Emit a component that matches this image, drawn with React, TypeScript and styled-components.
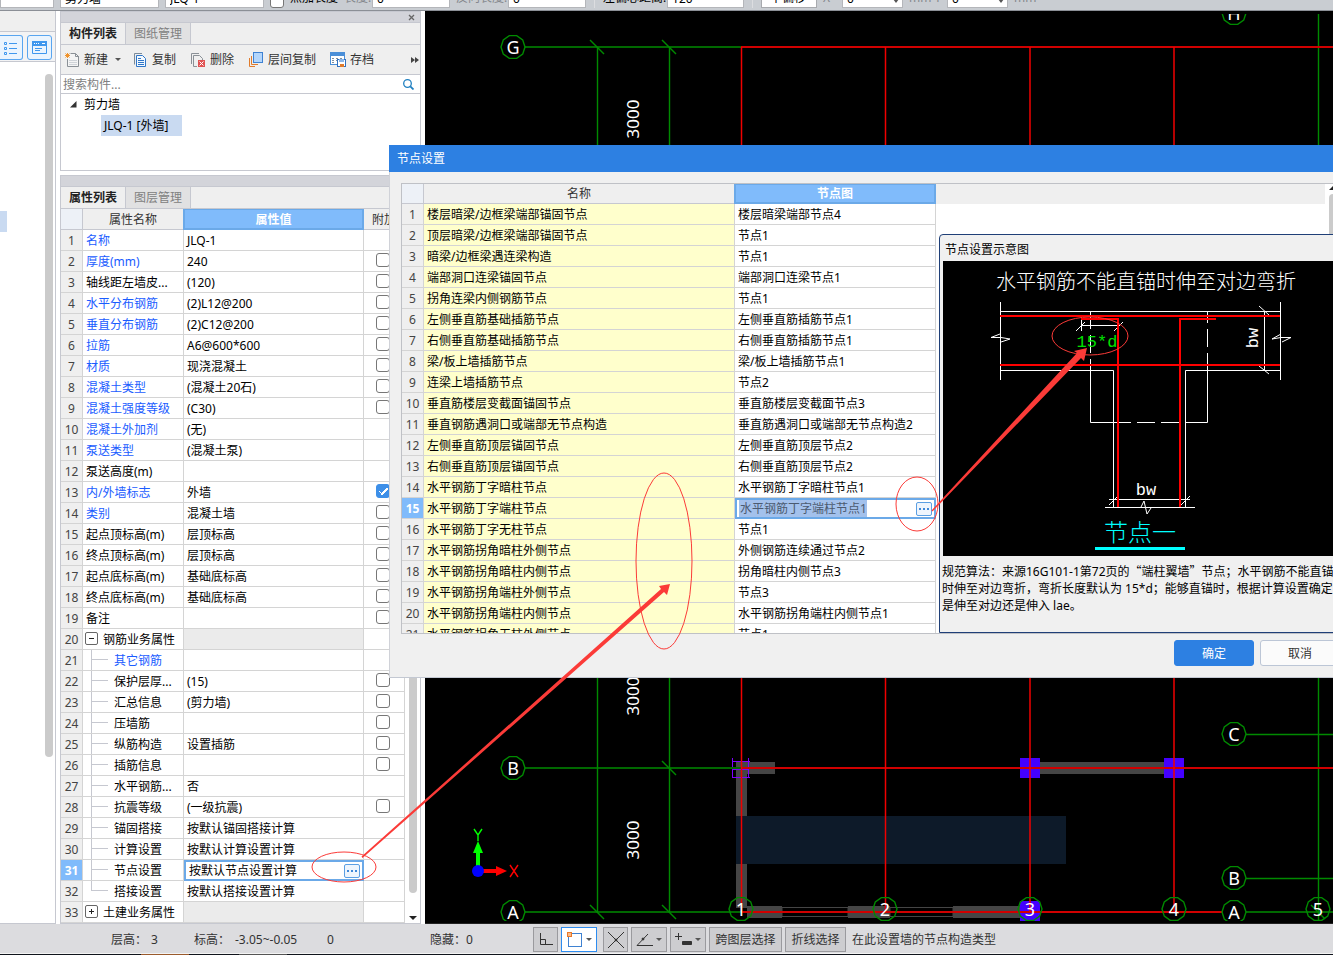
import React from 'react';
import styled, { createGlobalStyle, css } from 'styled-components';

const GlobalStyle = createGlobalStyle`
  * { box-sizing: border-box; }
  body { margin: 0; }
  body, button, input, select {
    font-family: "Noto Sans", "Noto Sans CJK SC", sans-serif;
    font-size: 12px;
    line-height: 18px;
    color: #000;
  }
  button, input, select { margin: 0; padding: 0; }
`;

const line = '#c6c8d0';
const gridLine = '#d4d4d4';
const selected = '#80bbfb';
const annotation = '#fb3b38';

const Screen = styled.div`
  position: relative;
  display: flex;
  flex-direction: column;
  min-height: 100vh;
  overflow: hidden;
  background: #fff;
`;

/* ---------- option bar ---------- */

const OptionBar = styled.div`
  display: flex;
  align-items: flex-end;
  gap: 6px;
  height: 11px;
  padding-bottom: 2px;
  overflow: hidden;
  white-space: nowrap;
  line-height: 24px;
  background: #c9cdd2;
  border-bottom: 1px solid #8b8f96;
`;

const OptionInput = styled.input<{ $w: number }>`
  width: ${p => p.$w}px;
  height: 22px;
  flex: none;
  padding: 2px 4px 0;
  border: 1px solid #b4b6ba;
  background: #fff;
`;

const OptionSelect = styled.select`
  width: 56px;
  height: 23px;
  flex: none;
  padding: 2px 8px 0;
  border: 1px solid #a8aaae;
  background: #fff;
  appearance: none;
`;

const OptionField = styled.label<{ $w: number; $muted?: boolean }>`
  display: flex;
  flex: none;
  height: 22px;
  color: ${p => (p.$muted ? '#85888d' : '#000')};
  > span { width: ${p => p.$w}px; }
`;

const OptionText = styled.span`
  height: 22px;
  color: #85888d;
`;

const OptionLabel = styled.label`
  height: 22px;
`;

const Spin = styled.span`
  position: relative;
  display: flex;
  &&& { width: auto; }
  &::after {
    content: '';
    position: absolute;
    right: 4px;
    bottom: 5px;
    border: 3px solid transparent;
    border-top: 4px solid #555;
    border-bottom: 0;
  }
`;

const OptionDivider = styled.i`
  flex: none;
  width: 1px;
  height: 20px;
  margin: 0 2px;
  background: #dcdde0;
`;

const CheckBox = styled.input.attrs({ type: 'checkbox' })`
  appearance: none;
  display: block;
  flex: none;
  width: 14px;
  height: 14px;
  border: 1px solid #777;
  border-radius: 3px;
  background: #fff;
  &:checked {
    border-color: #3d8fe8;
    background: #3d8fe8;
    background-image: linear-gradient(45deg, transparent 45%, #fff 45%, #fff 60%, transparent 60%),
      linear-gradient(-45deg, transparent 42%, #fff 42%, #fff 58%, transparent 58%);
    background-size: 4px 4px, 7px 7px;
    background-position: 2px 6px, 4px 3px;
    background-repeat: no-repeat;
  }
`;

/* ---------- workspace ---------- */

const Workspace = styled.div`
  display: flex;
  flex: 1;
  min-width: 0;
`;

const Sidebar = styled.aside`
  display: flex;
  flex-direction: column;
  flex: none;
  width: 56px;
  border-right: 1px solid ${line};
  border-bottom: 1px solid ${line};
`;

const SidebarHead = styled.div`
  height: 21px;
  background: #efefef;
  border-bottom: 1px solid ${line};
`;

const ViewSwitch = styled.div`
  display: flex;
  gap: 4px;
  height: 30px;
  padding: 3px 3px 0 0;
  background: #f3f3f4;
  border-bottom: 1px solid ${line};
`;

const ViewButton = styled.button<{ $cut?: boolean }>`
  display: flex;
  align-items: center;
  justify-content: center;
  width: ${p => (p.$cut ? 23 : 25)}px;
  height: 25px;
  background: #eaf4fe;
  border: 1px solid #58a5f0;
  border-left-width: ${p => (p.$cut ? 0 : 1)}px;
  border-radius: ${p => (p.$cut ? '0 3px 3px 0' : '3px')};
`;

const SidebarList = styled.div`
  display: flex;
  flex: 1;
  justify-content: space-between;
  padding: 12px 2px 0 0;
`;

const SidebarSelection = styled.div`
  width: 7px;
  height: 21px;
  margin-top: 137px;
  background: #c9daf1;
`;

const SidebarThumb = styled.div`
  width: 8px;
  height: 80.5%;
  background: #cbcbcb;
  border-radius: 4px;
`;

const PanelColumn = styled.div`
  display: flex;
  flex-direction: column;
  flex: none;
  gap: 4px;
  width: 369px;
  padding: 0 4px;
`;

const Panel = styled.section<{ $grow?: boolean }>`
  display: flex;
  flex-direction: column;
  ${p => p.$grow && 'flex: 1;'}
  border: 1px solid ${line};
  background: #fff;
`;

const PanelGrip = styled.div`
  display: flex;
  justify-content: flex-end;
  align-items: center;
  height: 11px;
  padding-right: 5px;
  background: #d3d4da;
  border-bottom: 1px solid ${line};
`;

const CloseButton = styled.button`
  display: flex;
  border: 0;
  background: none;
`;

const Tabs = styled.div`
  display: flex;
  height: 22px;
  background: #efefef;
  border-bottom: 1px solid ${line};
`;

const Tab = styled.button<{ $active?: boolean }>`
  width: 65px;
  border: 0;
  border-right: 1px solid ${line};
  background: ${p => (p.$active ? '#efefef' : '#e1e1e2')};
  color: ${p => (p.$active ? '#222' : '#808080')};
  font-weight: ${p => (p.$active ? 700 : 400)};
`;

const Toolbar = styled.div`
  display: flex;
  align-items: center;
  gap: 14px;
  height: 30px;
  padding: 0 1px 0 3px;
  background: #efefef;
  border-bottom: 1px solid ${line};
`;

const ToolButton = styled.button`
  display: flex;
  align-items: center;
  gap: 4px;
  border: 0;
  background: none;
  color: #333;
  white-space: nowrap;
`;

const Caret = styled.i`
  margin-left: 3px;
  border: 3px solid transparent;
  border-top-color: #555;
  border-bottom: 0;
`;

const ToolCaret = styled(Caret)`
  margin-right: -3px;
`;

const MoreButton = styled(ToolButton)`
  margin-left: auto;
`;

const SearchRow = styled.label`
  display: flex;
  align-items: center;
  height: 19px;
  padding: 0 6px 0 2px;
  border-bottom: 1px solid ${line};
`;

const SearchInput = styled.input`
  flex: 1;
  min-width: 0;
  height: 18px;
  padding-top: 2px;
  border: 0;
  outline: 0;
  background: none;
  &::placeholder { color: #808080; opacity: 1; }
`;

const Tree = styled.div`
  height: 76px;
`;

const TreeNode = styled.div`
  display: flex;
  align-items: center;
  gap: 7px;
  height: 21px;
  padding-left: 9px;
`;

const TreeLeaf = styled.div`
  width: 81px;
  height: 21px;
  margin-left: 40px;
  padding: 2px 0 0 3px;
  background: #c9daf1;
`;

/* ---------- data grids ---------- */

const PropertyBody = styled.div`
  display: flex;
  flex: 1;
  align-items: flex-start;
`;

const Grid = styled.table`
  flex: none;
  table-layout: fixed;
  border-collapse: separate;
  border-spacing: 0;
`;

const HeadCell = styled.th<{ $w: number; $h: number; $selected?: boolean; $corner?: boolean }>`
  width: ${p => p.$w}px;
  height: ${p => p.$h}px;
  padding: 1px 0 0;
  overflow: hidden;
  font-weight: ${p => (p.$selected ? 700 : 400)};
  color: ${p => (p.$selected ? '#fff' : '#333')};
  background: ${p => (p.$selected ? selected : p.$corner ? '#edf1f7' : '#efefef')};
  border-right: 1px solid ${line};
  border-bottom: 1px solid ${line};
  ${p => p.$selected && 'box-shadow: -1px 0 0 #6ba9e8, inset 0 0 0 1px #6ba9e8; border-color: #6ba9e8;'}
`;

const NumberCell = styled.th<{ $active?: boolean }>`
  height: 21px;
  padding: 2px 0 0;
  font-weight: ${p => (p.$active ? 700 : 400)};
  color: ${p => (p.$active ? '#fff' : '#444')};
  background: ${p => (p.$active ? selected : '#efefef')};
  border-right: 1px solid ${gridLine};
  border-bottom: 1px solid ${gridLine};
`;

const Cell = styled.td<{ $tone?: 'blue' | 'yellow' | 'gray'; $flush?: boolean }>`
  height: 21px;
  padding: ${p => (p.$flush ? 0 : 2)}px 0 0 3px;
  overflow: hidden;
  white-space: nowrap;
  color: ${p => (p.$tone === 'blue' ? '#1a5cff' : '#000')};
  background: ${p => (p.$tone === 'yellow' ? '#ffffcc' : p.$tone === 'gray' ? '#ebebeb' : '#fff')};
  border-right: 1px solid ${gridLine};
  border-bottom: 1px solid ${gridLine};
`;

const CheckCell = styled(Cell)`
  padding: 0 2px 2px 0;
  > input { margin: 0 auto; }
`;

const EditCell = styled.td`
  height: 21px;
  padding: 0;
`;

const Editor = styled.div`
  display: flex;
  align-items: center;
  height: 21px;
  padding: 0 2px;
  border: 2px solid #6ba9e8;
  background: #fff;
`;

const EditInput = styled.input<{ $highlight?: boolean }>`
  width: 128px;
  height: 17px;
  padding: 1px 0 0 1px;
  border: 0;
  outline: 0;
  ${p => p.$highlight
    ? css`background: #a3c1ec; color: #4b5a70;`
    : css`background: none;`}
`;

const EllipsisButton = styled.button`
  display: flex;
  align-items: center;
  justify-content: center;
  width: 16px;
  height: 14px;
  margin-left: auto;
  border: 1px solid #5b9fe3;
  border-radius: 2px;
  background: #eef5fd;
`;

const NameLine = styled.div`
  display: flex;
  align-items: center;
  height: 20px;
  > span { padding-top: 2px; }
`;

const Expander = styled.button`
  display: flex;
  align-items: center;
  justify-content: center;
  width: 13px;
  height: 13px;
  margin: 0 5px 1px -1px;
  border: 1px solid #666;
  border-radius: 2px;
  background: #fff;
`;

const Branch = styled.i<{ $last?: boolean }>`
  width: 17px;
  height: 20px;
  margin: 0 6px 0 5px;
  background:
    linear-gradient(${line}, ${line}) 0 9px / 17px 1px no-repeat,
    linear-gradient(${line}, ${line}) 0 0 / 1px ${p => (p.$last ? '10px' : '20px')} no-repeat;
`;

const PropertyScroll = styled.div`
  display: flex;
  flex: 1;
  flex-direction: column;
  align-items: center;
  align-self: stretch;
  gap: 23px;
  padding: 16px 0 3px;
`;

const PropertyThumb = styled.div`
  flex: 1;
  width: 8px;
  border-radius: 4px;
  background: #cbcbcb;
`;

const ScrollArrow = styled.i<{ $up?: boolean }>`
  border: 4px solid transparent;
  ${p => (p.$up ? 'border-bottom-color: #222; border-top: 0;' : 'border-top-color: #222; border-bottom: 0;')}
`;

/* ---------- drawing canvas ---------- */

const Canvas = styled.main`
  position: relative;
  flex: 1;
  min-width: 0;
  overflow: hidden;
  background: #000;
  border-bottom: 1px solid #222;
`;

const CanvasSvg = styled.svg`
  position: absolute;
  top: 0;
  left: 0;
  width: 100%;
  height: 100%;
`;

/* ---------- dialog ---------- */

const Dialog = styled.div`
  position: absolute;
  top: 145px;
  left: 389px;
  right: -19px;
  background: #f0f0f0;
  border-left: 1px solid #d0d2d8;
  border-bottom: 1px solid #c3c8d2;
`;

const DialogTitle = styled.h1`
  height: 27px;
  margin: 0 0 0 -1px;
  padding-left: 8px;
  font-size: 12px;
  font-weight: 400;
  line-height: 28px;
  color: #fff;
  background: #2d80e2;
`;

const DialogFrame = styled.div`
  display: flex;
  height: 451px;
  margin: 11px 12px 0 11px;
  overflow: hidden;
  background: #fff;
  border: 1px solid #bfc1c6;
  border-right: 0;
`;

const Preview = styled.div`
  display: flex;
  flex: 1;
  flex-direction: column;
  min-width: 0;
`;

const PreviewTop = styled.div`
  display: flex;
  height: 50px;
`;

const PreviewHead = styled.div`
  flex: 1;
  height: 20px;
  background: #efefef;
`;

const PreviewScroll = styled.div`
  display: flex;
  flex-direction: column;
  align-items: center;
  gap: 4px;
  width: 15px;
  padding-top: 2px;
`;

const PreviewThumb = styled.div`
  flex: 1;
  width: 8px;
  border-radius: 4px 4px 0 0;
  background: #cbcbcb;
`;

const Diagram = styled.section`
  flex: 1;
  margin-left: 3px;
  padding-left: 3px;
  background: #f0f0f0;
  border: 1px solid #1f3f77;
  border-top-left-radius: 4px;
`;

const DiagramTitle = styled.h2`
  height: 26px;
  margin: 0;
  padding: 6px 0 0 2px;
  font-size: 12px;
  font-weight: 400;
`;

const DiagramPicture = styled.svg`
  display: block;
  width: 100%;
  height: 295px;
  background: #000;
`;

const Description = styled.p`
  margin: 6px 0 0 -1px;
  line-height: 17px;
  white-space: nowrap;
  span { display: block; }
  q { quotes: none; font-family: "Noto Sans CJK SC", sans-serif; }
`;

const DialogFooter = styled.div`
  display: flex;
  justify-content: flex-end;
  gap: 6px;
  padding: 6px 12px 11px;
`;

const DialogButton = styled.button<{ $primary?: boolean }>`
  width: 80px;
  height: 26px;
  padding-top: 2px;
  border: 1px solid ${p => (p.$primary ? '#2d80e2' : '#bcc6d6')};
  border-radius: 3px;
  background: ${p => (p.$primary ? '#2d80e2' : '#fbfbfb')};
  color: ${p => (p.$primary ? '#fff' : '#333')};
`;

/* ---------- status bar ---------- */

const StatusBar = styled.footer`
  display: flex;
  align-items: center;
  gap: 3px;
  height: 29px;
  padding: 2px 0 0 111px;
  white-space: nowrap;
  color: #333;
  background: #dcdcdf;
`;

const StatusText = styled.span<{ $w?: number }>`
  flex: none;
  ${p => p.$w && `width: ${p.$w}px;`}
`;

const StatusButton = styled.button<{ $w: number; $active?: boolean; $spaced?: boolean }>`
  display: flex;
  align-items: center;
  justify-content: center;
  flex: none;
  width: ${p => p.$w}px;
  height: 25px;
  margin-right: ${p => (p.$spaced ? 3 : 0)}px;
  border: 1px solid ${p => (p.$active ? '#2d8cf0' : '#9a9a9e')};
  background: ${p => (p.$active ? '#fff' : '#cdcdd0')};
  color: #333;
`;

const TaskbarEdge = styled.div`
  height: 2px;
  background: linear-gradient(90deg, #10141c 141px, #9a5a2c 141px, #9a5a2c 189px, #10141c 189px, #10141c 239px, #555 239px, #555 287px, #10141c 287px);
  border-top: 1px solid #f4f4f4;
`;

const Markup = styled.svg`
  position: absolute;
  top: 0;
  left: 0;
  width: 100%;
  height: 100%;
  pointer-events: none;
`;

/* ---------- data ---------- */

type Property = {
  name: string;
  value?: string;
  blue?: boolean;
  check?: boolean;
  on?: boolean;
  group?: 'open' | 'closed';
  child?: boolean;
  editing?: boolean;
};

const properties: Property[] = [
  { name: '名称', value: 'JLQ-1', blue: true },
  { name: '厚度(mm)', value: '240', blue: true, check: true },
  { name: '轴线距左墙皮...', value: '(120)', check: true },
  { name: '水平分布钢筋', value: '(2)L12@200', blue: true, check: true },
  { name: '垂直分布钢筋', value: '(2)C12@200', blue: true, check: true },
  { name: '拉筋', value: 'A6@600*600', blue: true, check: true },
  { name: '材质', value: '现浇混凝土', blue: true, check: true },
  { name: '混凝土类型', value: '(混凝土20石)', blue: true, check: true },
  { name: '混凝土强度等级', value: '(C30)', blue: true, check: true },
  { name: '混凝土外加剂', value: '(无)', blue: true },
  { name: '泵送类型', value: '(混凝土泵)', blue: true },
  { name: '泵送高度(m)' },
  { name: '内/外墙标志', value: '外墙', blue: true, check: true, on: true },
  { name: '类别', value: '混凝土墙', blue: true, check: true },
  { name: '起点顶标高(m)', value: '层顶标高', check: true },
  { name: '终点顶标高(m)', value: '层顶标高', check: true },
  { name: '起点底标高(m)', value: '基础底标高', check: true },
  { name: '终点底标高(m)', value: '基础底标高', check: true },
  { name: '备注', check: true },
  { name: '钢筋业务属性', group: 'open' },
  { name: '其它钢筋', blue: true, child: true },
  { name: '保护层厚...', value: '(15)', check: true, child: true },
  { name: '汇总信息', value: '(剪力墙)', check: true, child: true },
  { name: '压墙筋', check: true, child: true },
  { name: '纵筋构造', value: '设置插筋', check: true, child: true },
  { name: '插筋信息', check: true, child: true },
  { name: '水平钢筋...', value: '否', child: true },
  { name: '抗震等级', value: '(一级抗震)', check: true, child: true },
  { name: '锚固搭接', value: '按默认锚固搭接计算', child: true },
  { name: '计算设置', value: '按默认计算设置计算', child: true },
  { name: '节点设置', value: '按默认节点设置计算', child: true, editing: true },
  { name: '搭接设置', value: '按默认搭接设置计算', child: true },
  { name: '土建业务属性', group: 'closed' },
];

const nodes: [string, string][] = [
  ['楼层暗梁/边框梁端部锚固节点', '楼层暗梁端部节点4'],
  ['顶层暗梁/边框梁端部锚固节点', '节点1'],
  ['暗梁/边框梁遇连梁构造', '节点1'],
  ['端部洞口连梁锚固节点', '端部洞口连梁节点1'],
  ['拐角连梁内侧钢筋节点', '节点1'],
  ['左侧垂直筋基础插筋节点', '左侧垂直筋插筋节点1'],
  ['右侧垂直筋基础插筋节点', '右侧垂直筋插筋节点1'],
  ['梁/板上墙插筋节点', '梁/板上墙插筋节点1'],
  ['连梁上墙插筋节点', '节点2'],
  ['垂直筋楼层变截面锚固节点', '垂直筋楼层变截面节点3'],
  ['垂直钢筋遇洞口或端部无节点构造', '垂直筋遇洞口或端部无节点构造2'],
  ['左侧垂直筋顶层锚固节点', '左侧垂直筋顶层节点2'],
  ['右侧垂直筋顶层锚固节点', '右侧垂直筋顶层节点2'],
  ['水平钢筋丁字暗柱节点', '水平钢筋丁字暗柱节点1'],
  ['水平钢筋丁字端柱节点', '水平钢筋丁字端柱节点1'],
  ['水平钢筋丁字无柱节点', '节点1'],
  ['水平钢筋拐角暗柱外侧节点', '外侧钢筋连续通过节点2'],
  ['水平钢筋拐角暗柱内侧节点', '拐角暗柱内侧节点3'],
  ['水平钢筋拐角端柱外侧节点', '节点3'],
  ['水平钢筋拐角端柱内侧节点', '水平钢筋拐角端柱内侧节点1'],
  ['水平钢筋拐角无柱外侧节点', '节点1'],
];

/* ---------- drawings ---------- */

const Dots = () => (
  <svg width="10" height="2" viewBox="0 0 10 2" fill="#3f88d8" aria-hidden="true">
    <path d="M0 0h2v2H0zM4 0h2v2H4zM8 0h2v2H8z" />
  </svg>
);

const NewIcon = () => (
  <svg width="16" height="16" viewBox="0 0 16 16" fill="none" aria-hidden="true">
    <path d="M6.5 1.500H11.500L14.500 4.500V14.500H3.500V7" fill="#f4f4f4" stroke="#8a9096" />
    <path d="M11.500 1.500V4.500H15" stroke="#8a9096" />
    <path d="M5 8.500h8M5 10.500h8M5 12.500h8" stroke="#cfd3d8" />
    <path d="M3.500 1v5M1 3.500h5M1.500 1.500l4 4M5.500 1.500l-4 4" stroke="#f0932b" />
  </svg>
);

const CopyIcon = () => (
  <svg width="16" height="16" viewBox="0 0 16 16" fill="none" aria-hidden="true">
    <path d="M2.500 12.500V1.500H10" stroke="#7b8a99" />
    <path d="M4.500 3.500H10.500L13.500 6.500V14.500H4.500Z" fill="#f3f9ff" stroke="#2f76c8" />
    <path d="M6 6.500h3M6 8.500h6M6 10.500h6M6 12.500h6" stroke="#2f76c8" />
  </svg>
);

const DeleteIcon = () => (
  <svg width="16" height="16" viewBox="0 0 16 16" fill="none" aria-hidden="true">
    <path d="M1.500 12V1.500H9M3.500 14.500V3.500H9.500L12.500 6.500V8M3.500 14.500H7" stroke="#8a9096" />
    <rect x="8" y="8" width="7" height="7" fill="#e05252" />
    <path d="M9.500 9.500l4 4M13.500 9.500l-4 4" stroke="#fff" />
  </svg>
);

const LayerIcon = () => (
  <svg width="16" height="16" viewBox="0 0 16 16" fill="none" aria-hidden="true">
    <path d="M1.500 6V14.500H7M3.500 4V12.500H10" stroke="#e07b2c" />
    <rect x="5.500" y=".5" width="9" height="10" fill="#b4d6fb" stroke="#3f82d2" />
  </svg>
);

const ArchiveIcon = () => (
  <svg width="16" height="16" viewBox="0 0 16 16" fill="none" aria-hidden="true">
    <rect x=".5" y=".5" width="14" height="12" fill="#fff" stroke="#4b8fd8" />
    <rect width="15" height="4" fill="#4b8fd8" />
    <path d="M2 6.500h2M6 6.500h2M10 6.500h2M2 8.500h2M6 8.500h2M2 10.500h2" stroke="#7f8fa0" />
    <rect x="7.500" y="7.500" width="8" height="7" fill="#fff" stroke="#2f70c0" />
    <path d="M9 7h5v3H9z" fill="#8ab6ea" />
    <path d="M10 12h4v3h-4z" fill="#e07b2c" />
  </svg>
);

const ring = (cx: number, cy: number) =>
  Array.from({ length: 10 }, (_, i) => {
    const a = (Math.PI / 5) * i;
    return `${(cx + 12 * Math.cos(a)).toFixed(1)},${(cy + 12 * Math.sin(a)).toFixed(1)}`;
  }).join(' ');

const bubbles: [string, number, number][] = [
  ['G', 513, 47], ['H', 1234, 13], ['B', 513, 768], ['A', 513, 912],
  ['C', 1234, 734], ['B', 1234, 878], ['A', 1234, 912],
  ['1', 741, 909], ['2', 885, 909], ['3', 1030, 909], ['4', 1174, 909], ['5', 1318, 909],
];

const ticks: [number, number][] = [[597, 47], [669, 47], [669, 768], [597, 912], [669, 912], [1318, 912]];

const Drawing = () => (
  <CanvasSvg>
    <defs>
      <clipPath id="sheet"><rect x="425" y="14" width="4000" height="907" /></clipPath>
    </defs>
    <g transform="translate(-425 -11)" clipPath="url(#sheet)">
      <rect x="736" y="762" width="11" height="146" fill="#454545" />
      <rect x="741" y="762" width="34" height="12" fill="#454545" />
      <rect x="1039" y="762" width="126" height="12" fill="#454545" />
      <rect x="747" y="906" width="35" height="12" fill="#454545" />
      <rect x="848" y="906" width="42" height="12" fill="#454545" />
      <rect x="953" y="906" width="70" height="12" fill="#454545" />
      <path d="M782 907.500h66v9h-66zM890 907.500h63v9h-63z" fill="none" stroke="#454545" />
      <rect x="736" y="816" width="330" height="48" fill="#0d1a29" />
      <g fill="#4400ff">
        <rect x="1020" y="758" width="20" height="20" />
        <rect x="1164" y="758" width="20" height="20" />
        <rect x="1020" y="901" width="20" height="20" />
      </g>
      <path d="M732.500 758V778M748.500 758V778M732 761.500H750M732 769.500H748M732 777.500H750" stroke="#7f00ff" fill="none" />
      <path d="M525 47H741M525 768H741M525 912H741M1246 912H3000" stroke="#006800" strokeWidth="2" />
      <g stroke="#008a00" strokeWidth="1.4">
        <path d="M597.500 47V912M669.500 47V912M1318.500 14V921M1246 734.500H3000M1246 878.500H3000" />
        {ticks.map(([x, y]) => <path key={`${x}-${y}`} d={`M${x - 7} ${y - 7}l14 14`} />)}
      </g>
      <path d="M741 47H3000M741 768H3000M741 912H1222" stroke="#d00000" strokeWidth="2" />
      <path d="M741.500 47V912M885.500 47V912M1030 47V912M1174 47V912" stroke="#f00000" strokeWidth="1.500" />
      {bubbles.map(([t, x, y]) => (
        <g key={`${t}-${x}-${y}`}>
          <polygon points={ring(x, y)} fill="none" stroke="#008a00" strokeWidth="1.4" />
          <text x={x} y={y + 7} fill="#fff" fontSize="18" textAnchor="middle">{t}</text>
        </g>
      ))}
      {[119, 696, 840].map(y => (
        <text key={y} transform={`translate(639 ${y}) rotate(-90)`} fill="#fff" fontSize="17" textAnchor="middle">3000</text>
      ))}
      <path d="M478 871V850" stroke="#0f0" strokeWidth="4" />
      <path d="M478 841l5 12h-10z" fill="#0f0" />
      <path d="M478 871H497" stroke="#f00" strokeWidth="4" />
      <path d="M507 871l-11-5v10z" fill="#f00" />
      <circle cx="478" cy="871" r="6" fill="#00f" />
      <path d="M474 829l4 6 4-6M478 835V841" stroke="#0f0" strokeWidth="1.400" fill="none" />
      <path d="M510 865l8 12M518 865l-8 12" stroke="#f00" strokeWidth="1.400" fill="none" />
    </g>
  </CanvasSvg>
);

const NodeDrawing = () => (
  <DiagramPicture>
    <g transform="translate(-943 -261)" fill="none">
      <text x="1146" y="289" fontSize="20" fontWeight="300" fill="#fff" textAnchor="middle"
        fontFamily='"Noto Sans CJK SC", sans-serif'>水平钢筋不能直锚时伸至对边弯折</text>
      <g stroke="#fff">
        <path d="M1000.500 302V380M1280.500 302V380M1000 311.500H1281M1000 370.500H1113.500V507M1280 370.500H1185.500V507" />
        <path d="M1090.500 311V329M1090.500 335V353M1090.500 359V422.500H1131M1137 422.500H1155M1161 422.500H1179M1185 422.500H1207.500V353M1207.500 311V323M1207.500 329V347" />
        <path d="M1081.500 319V331M1081 325.500H1118M1076 331l9-9M1114 331l9-9" />
        <path d="M1264.500 311V370M1259 306l10 9M1259 366l10 8" />
        <path d="M1000 334L991 337.500H1001L1010 339L1001 342M1281 334L1272 339L1281 337.500H1291L1282 342" />
        <path d="M1105 507.500H1195M1109 499.500H1190M1109 505l9-9M1181 505l9-9M1141 507L1144 501L1147 514L1151 508" />
      </g>
      <g stroke="#f00" strokeWidth="2">
        <path d="M1000 316H1280M1000 365H1280M1081 319H1118V507M1216 319H1180V507" />
      </g>
      <g fontFamily='"Liberation Mono", monospace' fontSize="17" textAnchor="middle">
        <text x="1097" y="347" fill="#00e000">15*d</text>
        <text x="1146" y="495" fill="#fff">bw</text>
        <text transform="translate(1258 338) rotate(-90)" fill="#fff">bw</text>
      </g>
      <text x="1140" y="541" fontSize="24" fontWeight="300" fill="#0ff" textAnchor="middle"
        fontFamily='"Noto Sans CJK SC", sans-serif'>节点一</text>
      <rect x="1095" y="547" width="90" height="3" fill="#0ff" />
    </g>
  </DiagramPicture>
);

/* ---------- sections ---------- */

const Options = () => (
  <OptionBar>
    <OptionInput $w={54} aria-label="楼层" />
    <OptionInput $w={99} aria-label="构件类型" defaultValue="剪力墙" />
    <OptionInput $w={99} aria-label="构件" defaultValue="JLQ-1" />
    <CheckBox id="extend" />
    <OptionLabel htmlFor="extend">点加长度</OptionLabel>
    <OptionField $w={28} $muted><span>长度:</span><OptionInput $w={78} defaultValue="0" /></OptionField>
    <OptionField $w={52} $muted><span>反向长度:</span><OptionInput $w={78} defaultValue="0" /></OptionField>
    <OptionDivider />
    <OptionField $w={64}><span>左偏心距离:</span><OptionInput $w={77} defaultValue="120" /></OptionField>
    <OptionDivider />
    <OptionSelect aria-label="偏移方式"><option>不偏移</option></OptionSelect>
    <OptionField $w={19} $muted><span>X=</span><Spin><OptionInput $w={61} defaultValue="0" /></Spin></OptionField>
    <OptionField $w={38} $muted><span>mm Y=</span><Spin><OptionInput $w={61} defaultValue="0" /></Spin></OptionField>
    <OptionText>mm</OptionText>
  </OptionBar>
);

const ComponentPanel = () => (
  <Panel>
    <PanelGrip>
      <CloseButton aria-label="关闭">
        <svg width="7" height="7" viewBox="0 0 7 7" stroke="#666" strokeWidth="1.3"><path d="M1 1l5 5M6 1L1 6" /></svg>
      </CloseButton>
    </PanelGrip>
    <Tabs><Tab $active>构件列表</Tab><Tab>图纸管理</Tab></Tabs>
    <Toolbar>
      <ToolButton><NewIcon />新建<ToolCaret /></ToolButton>
      <ToolButton><CopyIcon />复制</ToolButton>
      <ToolButton><DeleteIcon />删除</ToolButton>
      <ToolButton><LayerIcon />层间复制</ToolButton>
      <ToolButton><ArchiveIcon />存档</ToolButton>
      <MoreButton aria-label="更多">
        <svg width="8" height="6" viewBox="0 0 8 6" fill="#444"><path d="M0 0l4 3-4 3zM4 0l4 3-4 3z" /></svg>
      </MoreButton>
    </Toolbar>
    <SearchRow>
      <SearchInput placeholder="搜索构件..." />
      <svg width="11" height="11" viewBox="0 0 11 11" fill="none" stroke="#1f7fc0" aria-hidden="true">
        <circle cx="4.500" cy="4.500" r="3.800" strokeWidth="1.300" />
        <path d="M7.300 7.300L10.500 10.500" strokeWidth="1.800" />
      </svg>
    </SearchRow>
    <Tree>
      <TreeNode>
        <svg width="7" height="7" viewBox="0 0 7 7" fill="#333"><path d="M6.500 0V6.500H0z" /></svg>
        剪力墙
      </TreeNode>
      <TreeLeaf>JLQ-1 [外墙]</TreeLeaf>
    </Tree>
  </Panel>
);

const PropertyName = ({ p, last }: { p: Property; last: boolean }) => {
  if (p.group) {
    return (
      <NameLine>
        <Expander aria-label={p.group === 'open' ? '折叠' : '展开'}>
          <svg width="7" height="7" viewBox="0 0 7 7" stroke="#222">
            <path d={p.group === 'open' ? 'M1 3.500h5' : 'M1 3.500h5M3.500 1v5'} />
          </svg>
        </Expander>
        <span>{p.name}</span>
      </NameLine>
    );
  }
  if (p.child) return <NameLine><Branch $last={last} /><span>{p.name}</span></NameLine>;
  return <>{p.name}</>;
};

const PropertyPanel = () => (
  <Panel $grow>
    <PanelGrip />
    <Tabs><Tab $active>属性列表</Tab><Tab>图层管理</Tab></Tabs>
    <PropertyBody>
      <Grid>
        <thead>
          <tr>
            <HeadCell $w={22} $h={21} $corner />
            <HeadCell $w={101} $h={21}>属性名称</HeadCell>
            <HeadCell $w={180} $h={21} $selected>属性值</HeadCell>
            <HeadCell $w={41} $h={21}>附加</HeadCell>
          </tr>
        </thead>
        <tbody>
          {properties.map((p, i) => (
            <tr key={p.name}>
              <NumberCell scope="row" $active={p.editing}>{i + 1}</NumberCell>
              <Cell $tone={p.blue ? 'blue' : undefined} $flush={p.child || !!p.group}>
                <PropertyName p={p} last={i === 31} />
              </Cell>
              {p.editing ? (
                <EditCell>
                  <Editor>
                    <EditInput defaultValue={p.value} aria-label={p.name} />
                    <EllipsisButton aria-label="设置"><Dots /></EllipsisButton>
                  </Editor>
                </EditCell>
              ) : (
                <Cell $tone={p.group ? 'gray' : undefined}>{p.value}</Cell>
              )}
              <CheckCell>{p.check && <CheckBox defaultChecked={p.on} aria-label={`附加 ${p.name}`} />}</CheckCell>
            </tr>
          ))}
        </tbody>
      </Grid>
      <PropertyScroll><PropertyThumb /><ScrollArrow /></PropertyScroll>
    </PropertyBody>
  </Panel>
);

const NodeDialog = () => (
  <Dialog role="dialog" aria-label="节点设置">
    <DialogTitle>节点设置</DialogTitle>
    <DialogFrame>
      <Grid>
        <thead>
          <tr>
            <HeadCell $w={22} $h={20} $corner />
            <HeadCell $w={311} $h={20}>名称</HeadCell>
            <HeadCell $w={201} $h={20} $selected>节点图</HeadCell>
          </tr>
        </thead>
        <tbody>
          {nodes.map(([name, value], i) => (
            <tr key={name}>
              <NumberCell scope="row" $active={i === 14}>{i + 1}</NumberCell>
              <Cell $tone="yellow">{name}</Cell>
              {i === 14 ? (
                <EditCell>
                  <Editor>
                    <EditInput $highlight defaultValue={value} aria-label={name} />
                    <EllipsisButton aria-label="选择节点图"><Dots /></EllipsisButton>
                  </Editor>
                </EditCell>
              ) : (
                <Cell>{value}</Cell>
              )}
            </tr>
          ))}
        </tbody>
      </Grid>
      <Preview>
        <PreviewTop>
          <PreviewHead />
          <PreviewScroll><ScrollArrow $up /><PreviewThumb /></PreviewScroll>
        </PreviewTop>
        <Diagram>
          <DiagramTitle>节点设置示意图</DiagramTitle>
          <NodeDrawing />
          <Description>
            <span>规范算法：来源16G101-1第72页的<q>“端柱翼墙”</q>节点；水平钢筋不能直锚</span>
            <span>时伸至对边弯折，弯折长度默认为 15*d；能够直锚时，根据计算设置确定</span>
            <span>是伸至对边还是伸入 lae。</span>
          </Description>
        </Diagram>
      </Preview>
    </DialogFrame>
    <DialogFooter>
      <DialogButton $primary>确定</DialogButton>
      <DialogButton>取消</DialogButton>
    </DialogFooter>
  </Dialog>
);

const Status = () => (
  <StatusBar>
    <StatusText $w={37}>层高：</StatusText>
    <StatusText $w={40}>3</StatusText>
    <StatusText $w={38}>标高：</StatusText>
    <StatusText $w={89}>-3.05~-0.05</StatusText>
    <StatusText $w={100}>0</StatusText>
    <StatusText $w={100}>隐藏：0</StatusText>
    <StatusButton $w={25} aria-label="正交">
      <svg width="14" height="13" viewBox="0 0 14 13" fill="none" stroke="#333"><path d="M1.500 0V11.500H14M1.500 6.500H6.500V11.500" /></svg>
    </StatusButton>
    <StatusButton $w={36} $active $spaced aria-label="框选">
      <svg width="16" height="16" viewBox="0 0 16 16" fill="none">
        <rect x="1.500" y="1.500" width="13" height="13" stroke="#3f82d2" />
        <rect x=".5" y=".5" width="4" height="4" fill="#f8b98a" stroke="#e8792a" />
      </svg>
      <Caret />
    </StatusButton>
    <StatusButton $w={25} aria-label="交点">
      <svg width="16" height="16" viewBox="0 0 16 16" fill="none" stroke="#333">
        <path d="M0 0L16 16M16 0L0 16" /><circle cx="8" cy="8" r="1" fill="#333" />
      </svg>
    </StatusButton>
    <StatusButton $w={36} aria-label="角度">
      <svg width="17" height="14" viewBox="0 0 17 14" fill="none" stroke="#333">
        <path d="M12 1L1 12.500H17" /><circle cx="7" cy="6" r="1" fill="#333" />
      </svg>
      <Caret />
    </StatusButton>
    <StatusButton $w={36} aria-label="动态输入">
      <svg width="17" height="13" viewBox="0 0 17 13" stroke="#333">
        <path d="M3.500 0V7M0 3.500H7" /><path d="M7.500 8.500h9v3h-9z" fill="#333" />
      </svg>
      <Caret />
    </StatusButton>
    <StatusButton $w={73}>跨图层选择</StatusButton>
    <StatusButton $w={61} $spaced>折线选择</StatusButton>
    <StatusText>在此设置墙的节点构造类型</StatusText>
  </StatusBar>
);

const Annotations = () => (
  <Markup aria-hidden="true">
    <g fill="none" stroke={annotation} strokeWidth="1">
      <ellipse cx="664" cy="561" rx="28" ry="88" />
      <ellipse cx="917" cy="504" rx="21" ry="27" />
      <ellipse cx="1090" cy="336" rx="38" ry="19" />
      <ellipse cx="344" cy="867" rx="32" ry="15" />
    </g>
    <g fill={annotation}>
      <path d="M361.500 856.500L661 589L659 586L670 584L667 595L664 592L362.500 858Z" />
      <path d="M931.500 510.500L1077 353L1074 351L1087 348L1084 361L1081 358L932.500 511.500Z" />
    </g>
  </Markup>
);

export default function App() {
  return (
    <Screen lang="zh-CN">
      <GlobalStyle />
      <Options />
      <Workspace>
        <Sidebar>
          <SidebarHead />
          <ViewSwitch>
            <ViewButton $cut aria-label="列表视图">
              <svg width="14" height="14" viewBox="0 0 14 14" fill="none" stroke="#3f97ee">
                <path d="M.5 1.500h2v2h-2zM.5 6.500h2v2h-2zM.5 11.500h2v2h-2zM5 2.500h8M5 7.500h8M5 12.500h8" />
              </svg>
            </ViewButton>
            <ViewButton aria-label="窗口视图">
              <svg width="15" height="13" viewBox="0 0 15 13" fill="none" stroke="#3f97ee">
                <path d="M.5 .5h14v12H.5z" /><path d="M0 0h15v5H0z" fill="#3f97ee" stroke="none" />
                <path d="M2 2.500h1M4 2.500h1M6 2.500h1M10 2.500h3" stroke="#fff" /><path d="M3 7.500h7M3 9.500h5" />
              </svg>
            </ViewButton>
          </ViewSwitch>
          <SidebarList><SidebarSelection /><SidebarThumb /></SidebarList>
        </Sidebar>
        <PanelColumn>
          <ComponentPanel />
          <PropertyPanel />
        </PanelColumn>
        <Canvas><Drawing /></Canvas>
      </Workspace>
      <Status />
      <TaskbarEdge />
      <NodeDialog />
      <Annotations />
    </Screen>
  );
}
